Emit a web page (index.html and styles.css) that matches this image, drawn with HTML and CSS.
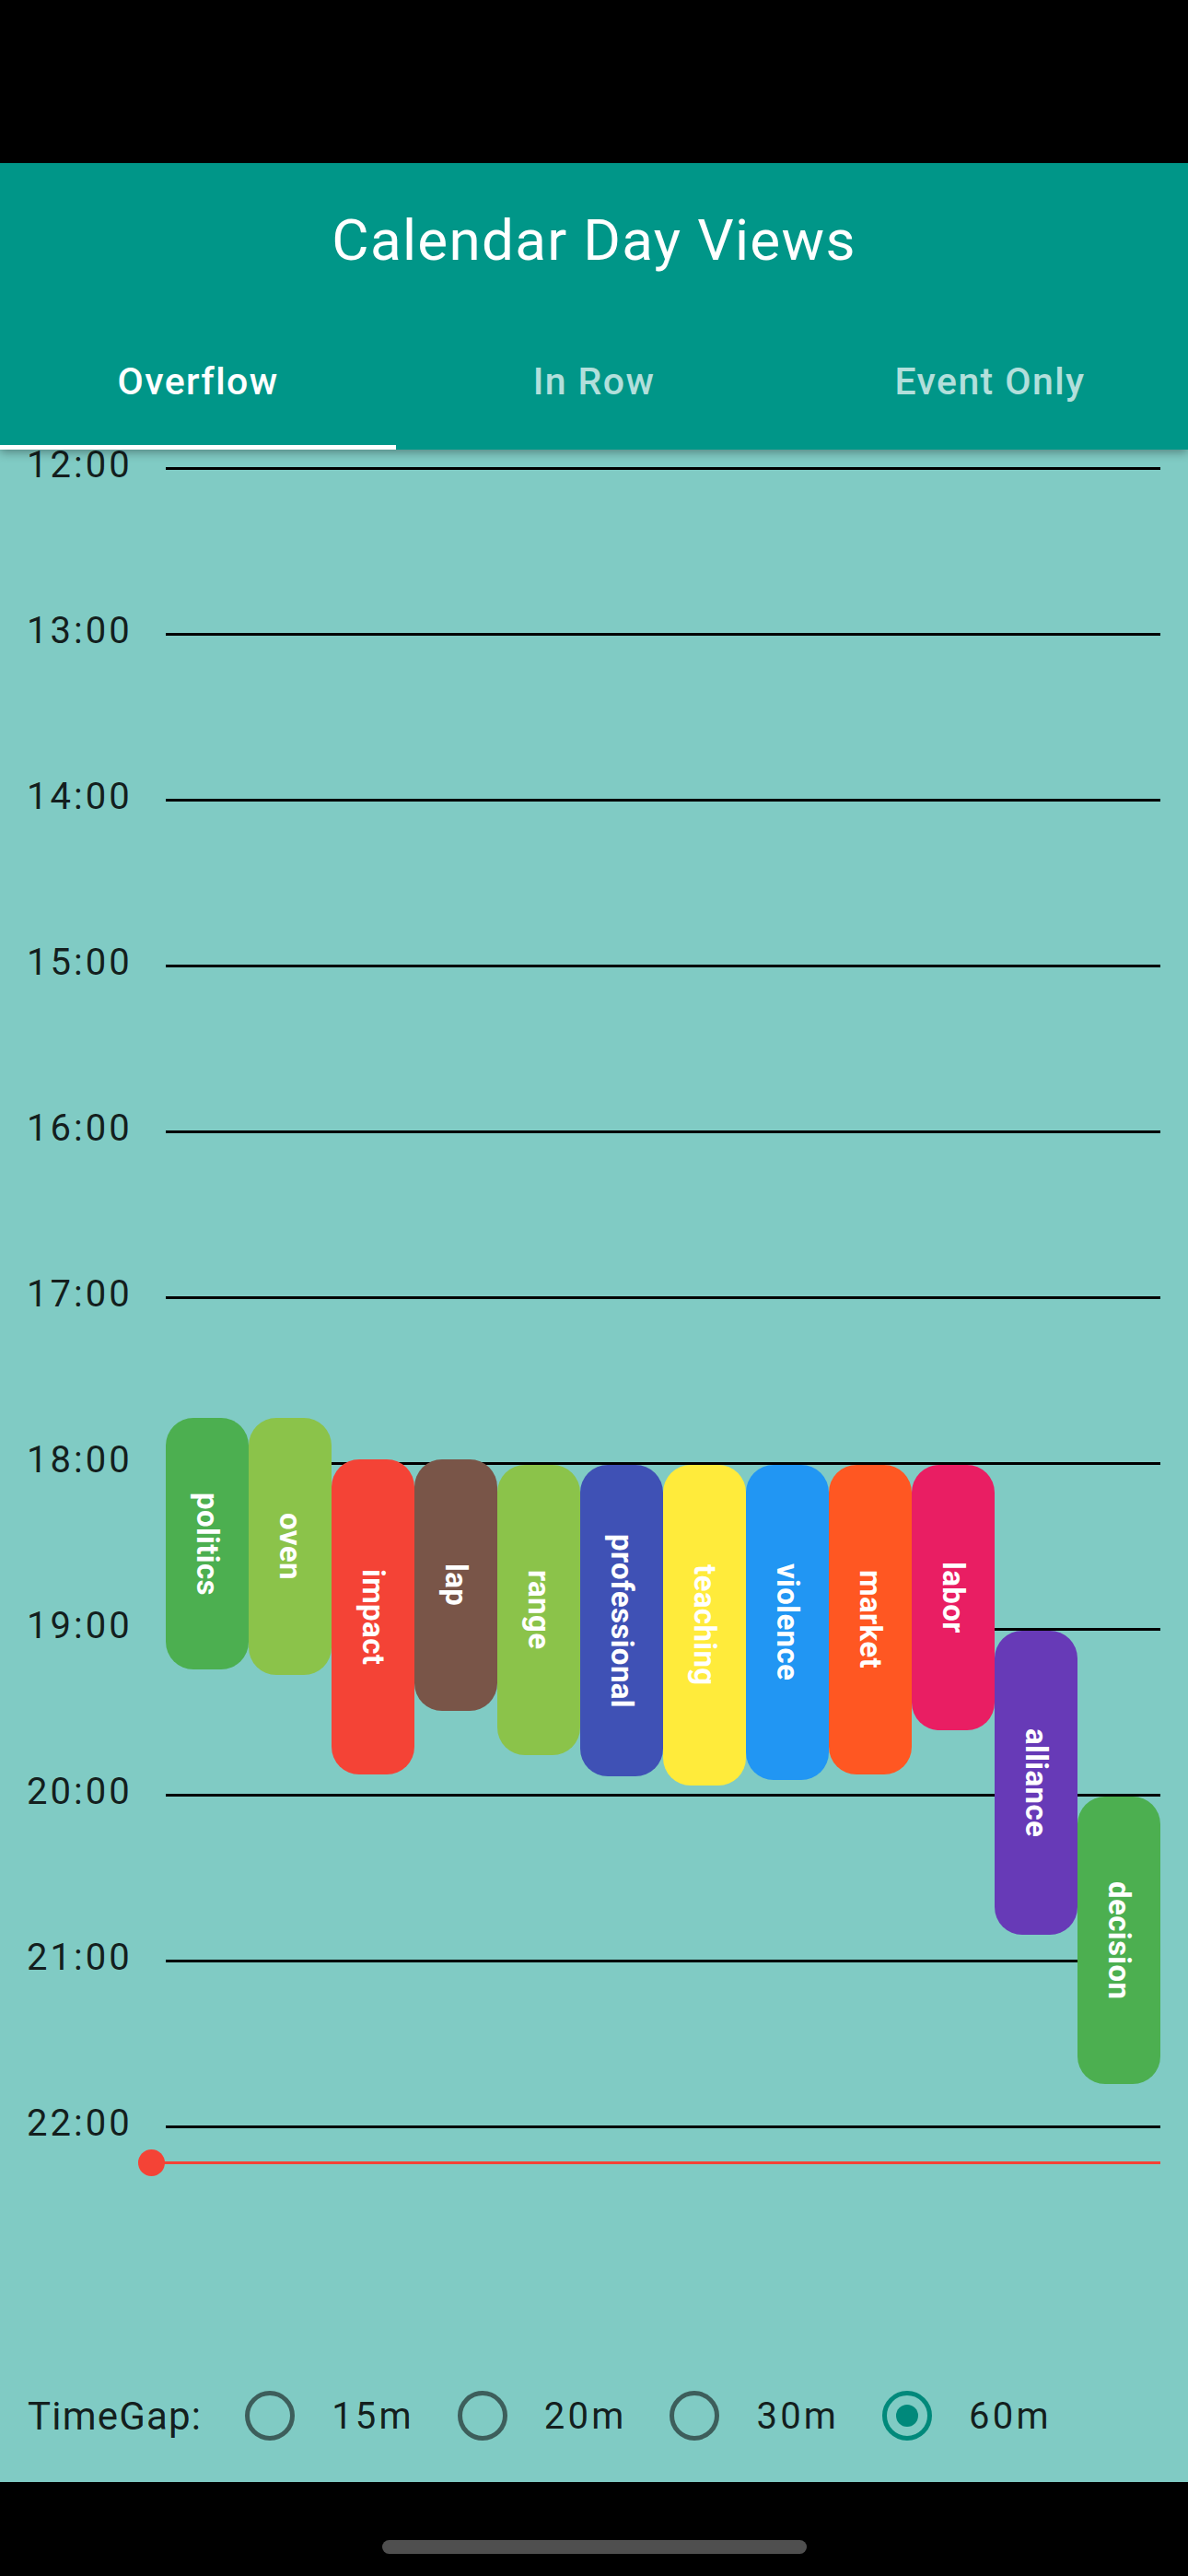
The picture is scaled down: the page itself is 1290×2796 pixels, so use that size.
FILE: index.html
```html
<!DOCTYPE html>
<html lang="en">
<head>
<meta charset="utf-8">
<title>Calendar Day Views</title>
<link rel="stylesheet" href="styles.css">
</head>
<body>
<div class="screen">
  <div class="status-bar"></div>
  <header class="appbar">
    <div class="toolbar"><h1 class="title">Calendar Day Views</h1></div>
    <nav class="tabs">
      <div class="tab active">Overflow</div>
      <div class="tab">In Row</div>
      <div class="tab">Event Only</div>
    </nav>
  </header>
  <main class="day-view">
    <div class="hours">
      <div class="hour"><span class="hour-label">12:00</span><span class="hour-line"></span></div>
      <div class="hour"><span class="hour-label">13:00</span><span class="hour-line"></span></div>
      <div class="hour"><span class="hour-label">14:00</span><span class="hour-line"></span></div>
      <div class="hour"><span class="hour-label">15:00</span><span class="hour-line"></span></div>
      <div class="hour"><span class="hour-label">16:00</span><span class="hour-line"></span></div>
      <div class="hour"><span class="hour-label">17:00</span><span class="hour-line"></span></div>
      <div class="hour"><span class="hour-label">18:00</span><span class="hour-line"></span></div>
      <div class="hour"><span class="hour-label">19:00</span><span class="hour-line"></span></div>
      <div class="hour"><span class="hour-label">20:00</span><span class="hour-line"></span></div>
      <div class="hour"><span class="hour-label">21:00</span><span class="hour-line"></span></div>
      <div class="hour"><span class="hour-label">22:00</span><span class="hour-line"></span></div>
    </div>
    <div class="events">
      <div class="event green" style="margin-top:1051px;height:273px"><span>politics</span></div>
      <div class="event lime" style="margin-top:1051px;height:279px"><span>oven</span></div>
      <div class="event red" style="margin-top:1096px;height:342px"><span>impact</span></div>
      <div class="event brown" style="margin-top:1096px;height:273px"><span>lap</span></div>
      <div class="event lime" style="margin-top:1102px;height:315px"><span>range</span></div>
      <div class="event indigo" style="margin-top:1102px;height:338px"><span>professional</span></div>
      <div class="event yellow" style="margin-top:1102px;height:348px"><span>teaching</span></div>
      <div class="event blue" style="margin-top:1102px;height:342px"><span>violence</span></div>
      <div class="event deep-orange" style="margin-top:1102px;height:336px"><span>market</span></div>
      <div class="event pink" style="margin-top:1102px;height:288px"><span>labor</span></div>
      <div class="event purple" style="margin-top:1282px;height:330px"><span>alliance</span></div>
      <div class="event green" style="margin-top:1462px;height:312px"><span>decision</span></div>
    </div>
    <div class="now-line" style="top:1858px"></div>
  </main>
  <footer class="timegap">
    <span class="timegap-label">TimeGap:</span>
    <div class="option"><span class="radio"></span><span class="option-label">15m</span></div>
    <div class="option"><span class="radio"></span><span class="option-label">20m</span></div>
    <div class="option"><span class="radio"></span><span class="option-label">30m</span></div>
    <div class="option"><span class="radio checked"></span><span class="option-label">60m</span></div>
  </footer>
  <div class="nav-bar"><div class="home-indicator"></div></div>
</div>
</body>
</html>
```

FILE: styles.css
```css
* {
  box-sizing: border-box;
}

html, body {
  margin: 0;
  padding: 0;
  background: #000;
}

.screen {
  width: 1290px;
  height: 2796px;
  display: flex;
  flex-direction: column;
  font-family: Roboto, "Noto Sans", sans-serif;
  overflow: hidden;
}

.status-bar {
  height: 177px;
  flex: none;
  background: #000;
}

.appbar {
  position: relative;
  z-index: 2;
  height: 311px;
  flex: none;
  background: #009688;
  display: flex;
  flex-direction: column;
  box-shadow: 0 3px 10px rgba(0, 0, 0, 0.35);
}

.toolbar {
  height: 168px;
  display: flex;
  align-items: center;
  justify-content: center;
}

.title {
  margin: 0;
  font-size: 62px;
  font-weight: 400;
  line-height: 62px;
  letter-spacing: 1.3px;
  color: #fff;
}

.tabs {
  flex: 1;
  display: grid;
  grid-template-columns: repeat(3, 1fr);
}

.tab {
  display: flex;
  align-items: center;
  justify-content: center;
  font-size: 41px;
  font-weight: 500;
  line-height: 41px;
  letter-spacing: 1.4px;
  color: #b2dfdb;
  border-bottom: 5px solid transparent;
}

.tab.active {
  color: #fff;
  border-bottom-color: #fff;
}

.day-view {
  position: relative;
  height: 2062px;
  flex: none;
  background: #80cbc4;
  overflow: hidden;
}

.hours {
  display: flex;
  flex-direction: column;
  gap: 140px;
}

.hour {
  height: 40px;
  display: flex;
  align-items: center;
}

.hour-label {
  width: 180px;
  flex: none;
  padding-left: 29px;
  margin-bottom: 6px;
  font-size: 40px;
  line-height: 40px;
  letter-spacing: 3px;
  color: rgba(0, 0, 0, 0.87);
}

.hour-line {
  flex: 1;
  height: 3px;
  margin-right: 30px;
  background: #000;
}

.events {
  position: absolute;
  top: 0;
  left: 180px;
  width: 1080px;
  display: grid;
  grid-template-columns: repeat(12, 90px);
  align-items: start;
}

.event {
  border-radius: 30px;
  display: flex;
  align-items: center;
  justify-content: center;
  color: #fff;
  font-size: 33px;
  font-weight: 700;
  letter-spacing: 0.4px;
}

.event span {
  writing-mode: vertical-rl;
  line-height: 1;
}

.green { background: #4caf50; }
.lime { background: #8bc34a; }
.red { background: #f44336; }
.brown { background: #795548; }
.indigo { background: #3f51b5; }
.yellow { background: #ffeb3b; }
.blue { background: #2196f3; }
.deep-orange { background: #ff5722; }
.pink { background: #e91e63; }
.purple { background: #673ab7; }

.now-line {
  position: absolute;
  left: 165px;
  right: 30px;
  height: 3px;
  background: #f44336;
}

.now-line::before {
  content: "";
  position: absolute;
  left: -15px;
  top: -13px;
  width: 29px;
  height: 29px;
  border-radius: 50%;
  background: #f44336;
}

.timegap {
  height: 144px;
  flex: none;
  background: #80cbc4;
  display: flex;
  align-items: center;
  padding-left: 30px;
  gap: 47px;
  color: rgba(0, 0, 0, 0.87);
}

.timegap-label {
  font-size: 42px;
  letter-spacing: 1.2px;
}

.option {
  display: flex;
  align-items: center;
  gap: 40px;
}

.option-label {
  font-size: 40px;
  letter-spacing: 3.2px;
}

.radio {
  width: 54px;
  height: 54px;
  border: 5.5px solid #3d5e5b;
  border-radius: 50%;
  display: grid;
  place-items: center;
}

.radio.checked {
  border-color: #00897b;
}

.radio.checked::after {
  content: "";
  width: 24px;
  height: 24px;
  border-radius: 50%;
  background: #00897b;
}

.nav-bar {
  flex: 1;
  background: #000;
  display: flex;
  justify-content: center;
  padding-top: 63px;
}

.home-indicator {
  width: 461px;
  height: 15px;
  border-radius: 8px;
  background: #4f4f4f;
}
```
